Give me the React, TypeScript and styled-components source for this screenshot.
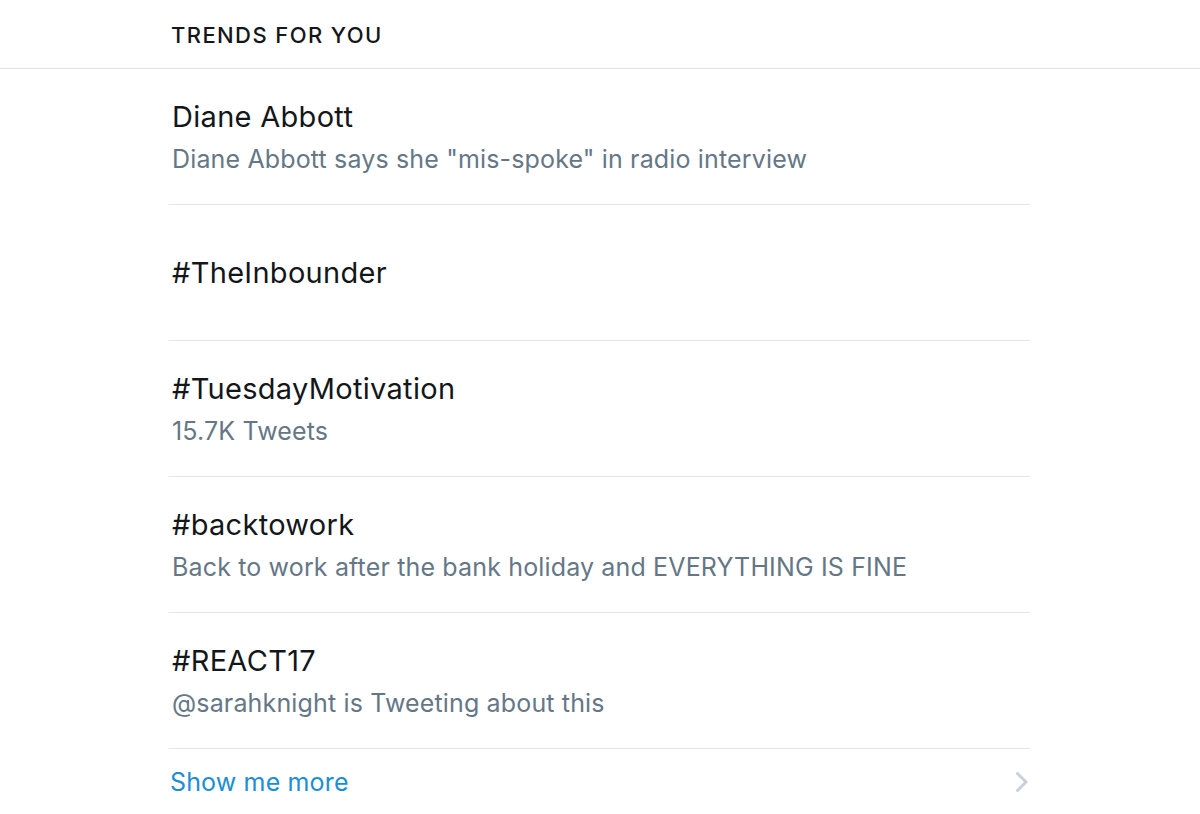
import React from "react";
import styled, { createGlobalStyle } from "styled-components";

const Global = createGlobalStyle`
  html, body { margin: 0; padding: 0; background: #ffffff; }
  body { font-family: Inter, "Noto Sans", sans-serif; -webkit-font-smoothing: antialiased; }
`;

const Page = styled.div`
  width: 1200px;
  height: 814px;
  overflow: hidden;
  background: #ffffff;
`;

const Header = styled.div`
  height: 69px;
  border-bottom: 1px solid #dde3e8;
  display: flex;
  align-items: center;
  padding-left: 171px;
  padding-top: 2px;
  box-sizing: border-box;
`;

const HeaderTitle = styled.h2`
  margin: 0;
  font-size: 22px;
  font-weight: 500;
  letter-spacing: 1.4px;
  color: #14171a;
`;

const List = styled.div`
  margin-left: 169px;
  width: 861px;
  display: flex;
  flex-direction: column;
`;

const Row = styled.div`
  height: 136px;
  box-sizing: border-box;
  border-bottom: 1px solid #e1e8ed;
  display: flex;
  flex-direction: column;
  justify-content: center;
  padding-left: 3px;
  gap: 10px;
`;

const Title = styled.div`
  font-size: 29px;
  font-weight: 400;
  letter-spacing: 0.3px;
  color: #14171a;
  line-height: 34px;
`;

const Subtitle = styled.div`
  font-size: 25px;
  letter-spacing: 0.15px;
  color: #657786;
  line-height: 30px;
`;

const MoreRow = styled.div`
  height: 66px;
  display: flex;
  align-items: center;
  justify-content: space-between;
  padding-left: 1px;
`;

const MoreLink = styled.a`
  font-size: 25px;
  letter-spacing: 0.15px;
  color: #1b8ed6;
  text-decoration: none;
`;

const Chevron = styled.svg`
  width: 15px;
  height: 24px;
  margin-right: 1px;
`;

const trends = [
  { title: "Diane Abbott", sub: 'Diane Abbott says she "mis-spoke" in radio interview' },
  { title: "#TheInbounder" },
  { title: "#TuesdayMotivation", sub: "15.7K Tweets" },
  { title: "#backtowork", sub: "Back to work after the bank holiday and EVERYTHING IS FINE" },
  { title: "#REACT17", sub: "@sarahknight is Tweeting about this" },
];

export default function App() {
  return (
    <Page>
      <Global />
      <Header>
        <HeaderTitle>TRENDS FOR YOU</HeaderTitle>
      </Header>
      <List>
        {trends.map((t) => (
          <Row key={t.title}>
            <Title>{t.title}</Title>
            {t.sub && <Subtitle>{t.sub}</Subtitle>}
          </Row>
        ))}
        <MoreRow>
          <MoreLink href="#">Show me more</MoreLink>
          <Chevron viewBox="0 0 15 24">
            <path d="M3.5 3.5 L12 12 L3.5 20.5" fill="none" stroke="#c8d1d8" strokeWidth="3" strokeLinecap="round" strokeLinejoin="round" />
          </Chevron>
        </MoreRow>
      </List>
    </Page>
  );
}
